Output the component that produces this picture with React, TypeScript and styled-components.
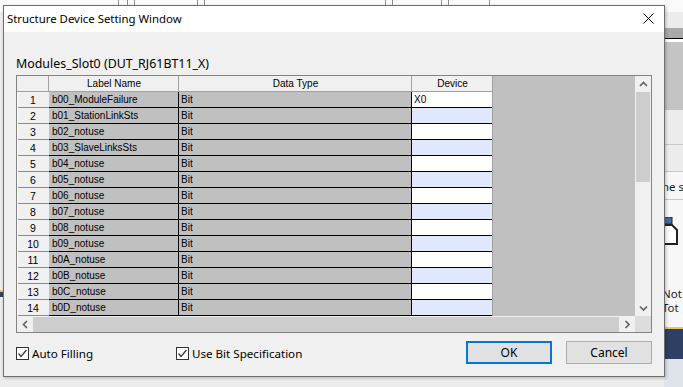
import styled, { createGlobalStyle } from "styled-components";

const GlobalStyle = createGlobalStyle`
    html, body {
        margin: 0;
        padding: 0;
    }
    body {
        width: 683px;
        height: 387px;
        overflow: hidden;
        background: #ececec;
        font-family: "Noto Sans", "Liberation Sans", sans-serif;
    }
`;

/* background application peeking around the dialog */
const Desktop = styled.div`
    position: relative;
    width: 683px;
    height: 387px;
    display: flex;
    flex-direction: column;
    overflow: hidden;
`;

const Workspace = styled.div`
    flex: 1;
    display: flex;
`;

const MainArea = styled.div`
    flex: 1;
    display: flex;
    flex-direction: column;
    background: #ececec;
`;

const Toolbar = styled.div`
    height: 12px;
    background: #fbfbfb;
    display: flex;
    gap: 6px;
    padding-left: 118px;
`;

const ToolSlot = styled.div<{ $w: number }>`
    width: ${(p) => p.$w}px;
    border-left: 1px solid #8a8a8a;
    border-right: 1px solid #8a8a8a;
`;

const MainFill = styled.div<{ $h?: number }>`
    flex: ${(p) => (p.$h ? "none" : "1")};
    height: ${(p) => (p.$h ? `${p.$h}px` : "auto")};
`;

const NavyBand = styled.div`
    height: 5px;
    border-top: 2px solid #e4c56a;
    background: #2f3f64;
`;

const SidePane = styled.div`
    width: 19px;
    display: flex;
    flex-direction: column;
    font-family: "Noto Sans", sans-serif;
    font-size: 11.5px;
    color: #1b1b1b;
    overflow: hidden;
    white-space: nowrap;
`;

const SideBand = styled.div<{ $h: number; $bg: string; $line?: string }>`
    height: ${(p) => p.$h}px;
    flex: none;
    box-sizing: border-box;
    background: ${(p) => p.$bg};
    border-bottom: ${(p) => (p.$line ? `1px solid ${p.$line}` : "none")};
    line-height: 13px;
    overflow: hidden;
`;

const SideText = styled.div<{ $top: number }>`
    margin-top: ${(p) => p.$top}px;
    margin-left: -2px;
    height: 13px;
`;

const SideIcon = styled.svg`
    display: block;
    margin-top: 17px;
`;

const StatusStrip = styled.div`
    height: 11px;
    background: linear-gradient(90deg, #d9dde4, #c3cbd8);
`;

/* the dialog window */
const Window = styled.div`
    position: absolute;
    top: 5px;
    left: 3px;
    width: 662px;
    height: 372px;
    box-sizing: border-box;
    border: 1px solid #6e6e6e;
    background: #f0f0f0;
    display: flex;
    flex-direction: column;
    box-shadow: 1px 1px 3px rgba(0, 0, 0, 0.25);
`;

const TitleBar = styled.div`
    height: 26px;
    background: #ffffff;
    display: flex;
    align-items: center;
    justify-content: space-between;
    padding: 0 10px 0 3px;
`;

const TitleText = styled.span`
    font-size: 11.4px;
    color: #000;
    margin-top: -2px;
`;

const CloseGlyph = styled.svg`
    display: block;
    margin-top: -2px;
`;

const Body = styled.div`
    flex: 1;
    display: flex;
    flex-direction: column;
    padding: 23px 12px 0 12px;
`;

const StructName = styled.div`
    font-size: 12.4px;
    line-height: 18px;
    color: #000;
    height: 20px;
`;

const GridFrame = styled.div`
    display: grid;
    grid-template-columns: 618px 16px;
    grid-template-rows: 240px 16px;
    border: 1px solid #828282;
    width: 634px;
    font-family: "Liberation Sans", Arial, sans-serif;
    font-size: 10px;
    color: #000;
`;

const TableArea = styled.div`
    background: #c0c0c0;
    display: flex;
    flex-direction: column;
`;

const Row = styled.div`
    display: grid;
    grid-template-columns: 32px 130px 233px 81px;
    grid-template-rows: 16px;
    height: 16px;
`;

const HeadCell = styled.div`
    background: #f0f0f0;
    box-shadow: inset -1px -1px 0 #a0a0a0;
    text-align: center;
    line-height: 15px;
`;

const NumCell = styled.div`
    background: #f0f0f0;
    box-shadow: inset 1px 0 0 #ffffff, inset 0 -1px 0 #8c8c8c;
    text-align: center;
    line-height: 16px;
    font-size: 10.5px;
`;

const DataCell = styled.div<{ $pad: number }>`
    background: #c0c0c0;
    box-shadow: inset -1px -1px 0 #000000;
    padding-left: ${(p) => p.$pad}px;
    line-height: 15px;
    white-space: nowrap;
    overflow: hidden;
`;

const DeviceCell = styled.div<{ $alt: boolean }>`
    background: ${(p) => (p.$alt ? "#e1e8fc" : "#ffffff")};
    box-shadow: inset -1px 0 0 #a0a0a0, inset 0 -1px 0 #000000;
    padding-left: 2px;
    line-height: 15px;
`;

const VScroll = styled.div`
    background: #f0f0f0;
    display: flex;
    flex-direction: column;
    align-items: stretch;
`;

const HScroll = styled.div`
    background: #f0f0f0;
    display: flex;
    align-items: stretch;
`;

const ArrowBtn = styled.div`
    flex: none;
    width: 16px;
    height: 16px;
    display: flex;
    align-items: center;
    justify-content: center;
`;

const VThumb = styled.div`
    height: 90px;
    margin: 0 1px;
    background: #cdcdcd;
`;

const HThumb = styled.div`
    width: 586px;
    margin-top: 1px;
    background: #cdcdcd;
`;

const Spacer = styled.div`
    flex: 1;
`;

const Corner = styled.div`
    background: #dcdcdc;
`;

const Footer = styled.div`
    display: flex;
    align-items: center;
    height: 22px;
    margin-top: 9px;
    font-size: 11.6px;
    color: #000;
`;

const CheckLabel = styled.label<{ $w?: number }>`
    display: flex;
    align-items: center;
    gap: 3px;
    width: ${(p) => (p.$w ? `${p.$w}px` : "auto")};
`;

const Box = styled.span`
    width: 13px;
    height: 13px;
    box-sizing: border-box;
    border: 1px solid #333333;
    background: #ffffff;
    display: flex;
    align-items: center;
    justify-content: center;
`;

const Buttons = styled.div`
    margin-left: auto;
    display: flex;
    gap: 14px;
    margin-top: -2px;
`;

const Button = styled.button<{ $primary?: boolean }>`
    width: 86px;
    height: 23px;
    box-sizing: border-box;
    background: #e1e1e1;
    border: ${(p) => (p.$primary ? "2px solid #0078d7" : "1px solid #adadad")};
    font-family: "Noto Sans", "Liberation Sans", sans-serif;
    font-size: 12px;
    color: #000;
    padding: 0;
`;

const labels = [
    "b00_ModuleFailure",
    "b01_StationLinkSts",
    "b02_notuse",
    "b03_SlaveLinksSts",
    "b04_notuse",
    "b05_notuse",
    "b06_notuse",
    "b07_notuse",
    "b08_notuse",
    "b09_notuse",
    "b0A_notuse",
    "b0B_notuse",
    "b0C_notuse",
    "b0D_notuse",
];

function Chevron({ dir }: { dir: "up" | "down" | "left" | "right" }) {
    const pts = {
        up: "1,6 4.5,2.5 8,6",
        down: "1,2.5 4.5,6 8,2.5",
        left: "6,1 2.5,4.5 6,8",
        right: "2.5,1 6,4.5 2.5,8",
    }[dir];
    return (
        <svg width="9" height="9" viewBox="0 0 9 9">
            <polyline points={pts} fill="none" stroke="#606060" strokeWidth="1.6" />
        </svg>
    );
}

function Check() {
    return (
        <svg width="11" height="11" viewBox="0 0 11 11">
            <polyline points="1.5,5.5 4,8.5 9.5,2" fill="none" stroke="#333" strokeWidth="1.2" />
        </svg>
    );
}

function App() {
    return (
        <Desktop>
            <GlobalStyle />
            <Workspace>
                <MainArea>
                    <Toolbar>
                        <ToolSlot $w={8} />
                        <ToolSlot $w={62} />
                        <ToolSlot $w={180} />
                        <ToolSlot $w={48} />
                        <ToolSlot $w={40} />
                    </Toolbar>
                    <MainFill $h={278} />
                    <NavyBand />
                    <MainFill />
                </MainArea>
                <SidePane>
                    <SideBand $h={12} $bg="#fafafa" />
                    <SideBand $h={16} $bg="#ececec" />
                    <SideBand $h={11} $bg="#a9a9a9" $line="#000" />
                    <SideBand $h={3} $bg="#ffffff" />
                    <SideBand $h={68} $bg="#c4c4c4" />
                    <SideBand $h={35} $bg="#ececec" $line="#c8c8c8" />
                    <SideBand $h={27} $bg="#ececec" $line="#c8c8c8" />
                    <SideBand $h={28} $bg="#f7f7f7" $line="#c8c8c8">
                        <SideText $top={8}>ne s</SideText>
                    </SideBand>
                    <SideBand $h={127} $bg="#f7f7f7">
                        <SideIcon width="19" height="28" viewBox="0 0 19 28">
                            <rect x="0" y="0" width="8" height="7" fill="#3d6ea8" stroke="#222" />
                            <path d="M0 8 H8 L13 13 V27 H0" fill="#fff" stroke="#222" strokeWidth="2" />
                        </SideIcon>
                        <SideText $top={42}>Not</SideText>
                        <SideText $top={1}>Tot</SideText>
                    </SideBand>
                    <SideBand $h={2} $bg="#e4c56a" />
                    <SideBand $h={30} $bg="#2f3f64" />
                    <SideBand $h={60} $bg="#dfe3ea" />
                </SidePane>
            </Workspace>
            <StatusStrip />

            <Window>
                <TitleBar>
                    <TitleText>Structure Device Setting Window</TitleText>
                    <CloseGlyph width="11" height="11" viewBox="0 0 11 11">
                        <path d="M0.5 0.5 L10.5 10.5 M10.5 0.5 L0.5 10.5" stroke="#000" strokeWidth="1" />
                    </CloseGlyph>
                </TitleBar>
                <Body>
                    <StructName>Modules_Slot0 (DUT_RJ61BT11_X)</StructName>
                    <GridFrame>
                        <TableArea>
                            <Row>
                                <HeadCell />
                                <HeadCell>Label Name</HeadCell>
                                <HeadCell>Data Type</HeadCell>
                                <HeadCell>Device</HeadCell>
                            </Row>
                            {labels.map((name, i) => (
                                <Row key={name}>
                                    <NumCell>{i + 1}</NumCell>
                                    <DataCell $pad={3}>{name}</DataCell>
                                    <DataCell $pad={2}>Bit</DataCell>
                                    <DeviceCell $alt={i % 2 === 1}>{i === 0 ? "X0" : ""}</DeviceCell>
                                </Row>
                            ))}
                        </TableArea>
                        <VScroll>
                            <ArrowBtn>
                                <Chevron dir="up" />
                            </ArrowBtn>
                            <VThumb />
                            <Spacer />
                            <ArrowBtn>
                                <Chevron dir="down" />
                            </ArrowBtn>
                        </VScroll>
                        <HScroll>
                            <ArrowBtn>
                                <Chevron dir="left" />
                            </ArrowBtn>
                            <HThumb />
                            <Spacer />
                            <ArrowBtn>
                                <Chevron dir="right" />
                            </ArrowBtn>
                        </HScroll>
                        <Corner />
                    </GridFrame>
                    <Footer>
                        <CheckLabel $w={160}>
                            <Box>
                                <Check />
                            </Box>
                            Auto Filling
                        </CheckLabel>
                        <CheckLabel>
                            <Box>
                                <Check />
                            </Box>
                            Use Bit Specification
                        </CheckLabel>
                        <Buttons>
                            <Button $primary>OK</Button>
                            <Button>Cancel</Button>
                        </Buttons>
                    </Footer>
                </Body>
            </Window>
        </Desktop>
    );
}

export default App;
